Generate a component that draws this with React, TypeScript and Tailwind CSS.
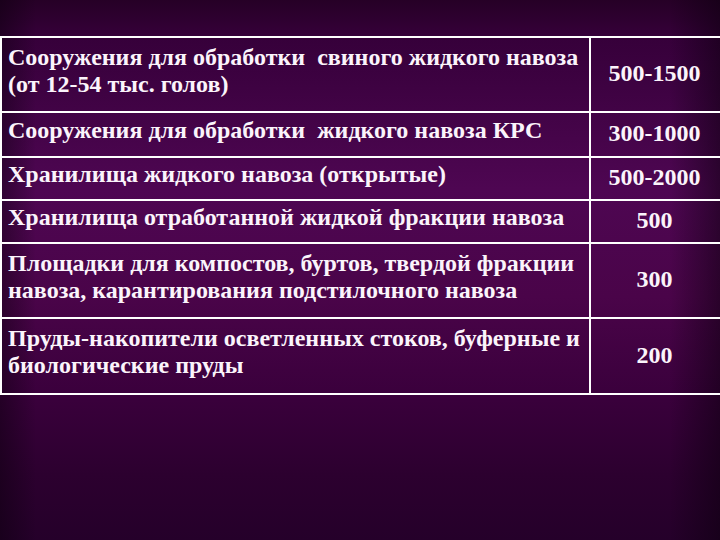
import * as React from "react";

const rows: { label: string[]; value: string; h: string }[] = [
  { label: ["Сооружения для обработки  свиного жидкого навоза", "(от 12-54 тыс. голов)"], value: "500-1500", h: "h-[75px]" },
  { label: ["Сооружения для обработки  жидкого навоза КРС"], value: "300-1000", h: "h-[45px]" },
  { label: ["Хранилища жидкого навоза (открытые)"], value: "500-2000", h: "h-[43px]" },
  { label: ["Хранилища отработанной жидкой фракции навоза"], value: "500", h: "h-[43px]" },
  { label: ["Площадки для компостов, буртов, твердой фракции", "навоза, карантирования подстилочного навоза"], value: "300", h: "h-[75px]" },
  { label: ["Пруды-накопители осветленных стоков, буферные и", "биологические пруды"], value: "200", h: "h-[76px]" },
];

export default function App() {
  return (
    <div className="relative h-[540px] w-[720px] overflow-hidden bg-[linear-gradient(to_right,rgba(10,0,12,0.45),transparent_5%,transparent_93%,rgba(10,0,12,0.5)),linear-gradient(to_bottom,#260026_0%,#36003a_7%,#4e0652_35%,#4a0449_55%,#3a003c_73%,#2c002f_88%,#25002a_100%)] pt-[36px] font-['Liberation_Serif','Times_New_Roman',serif] font-bold text-[#fbf4fb]">
      <div className="w-[724px] border-l-2 border-t-2 border-white">
        {rows.map((r, i) => (
          <div key={i} className={`grid grid-cols-[589px_1fr] ${r.h}`}>
            <div className="flex flex-col justify-center border-b-2 border-r-2 border-white pb-[8px] pl-[6px] text-[24px] leading-[27px] whitespace-nowrap">
              {r.label.map((l, j) => (
                <span key={j} className="whitespace-pre">{l}</span>
              ))}
            </div>
            <div className="flex items-center justify-center border-b-2 border-r-2 border-white pb-[2px] pr-[4px] text-[24px] leading-[27px]">
              {r.value}
            </div>
          </div>
        ))}
      </div>
    </div>
  );
}
